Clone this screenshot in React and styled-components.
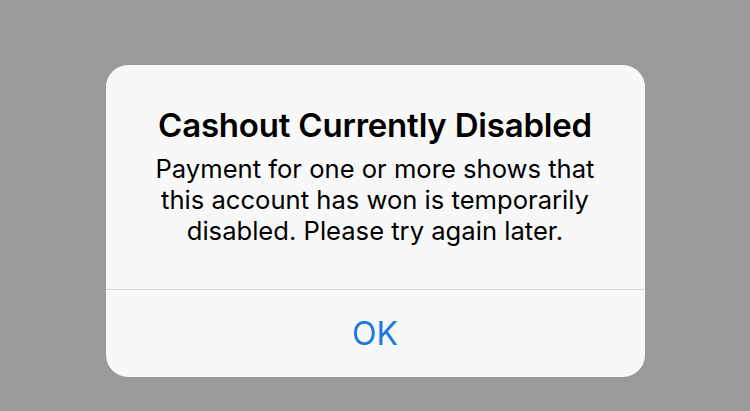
import React from "react";
import styled, { createGlobalStyle } from "styled-components";

const GlobalStyle = createGlobalStyle`
    html, body {
        margin: 0;
        padding: 0;
        background-color: #9a9a9a;
    }
    body {
        font-family: Inter, "Liberation Sans", sans-serif;
    }
`;

const Page = styled.div`
    width: 750px;
    height: 411px;
    display: flex;
    justify-content: center;
    align-items: flex-start;
    padding-top: 65px;
    box-sizing: border-box;
`;

const Dialog = styled.div`
    width: 539px;
    height: 312px;
    background-color: #f8f8f8;
    border-radius: 22px;
    display: flex;
    flex-direction: column;
    overflow: hidden;
`;

const Body = styled.div`
    height: 224px;
    box-sizing: border-box;
    padding: 38px 10px 0;
    text-align: center;
    color: #000;
`;

const Title = styled.h2`
    margin: 0;
    font-size: 33px;
    font-weight: 600;
    line-height: 44px;
    letter-spacing: -0.2px;
`;

const Message = styled.p`
    margin: 6px 0 0;
    font-size: 25.6px;
    font-weight: 400;
    line-height: 31px;
`;

const Actions = styled.div`
    flex: 1;
    display: flex;
    border-top: 1px solid #d9d9dc;
`;

const ActionButton = styled.button`
    flex: 1;
    border: none;
    background: transparent;
    font-family: inherit;
    font-size: 32px;
    font-weight: 400;
    color: #1b7ae0;
    cursor: pointer;
`;

const App = () => {
    return (
        <>
            <GlobalStyle />
            <Page>
                <Dialog>
                    <Body>
                        <Title>Cashout Currently Disabled</Title>
                        <Message>
                            Payment for one or more shows that
                            <br />
                            this account has won is temporarily
                            <br />
                            disabled. Please try again later.
                        </Message>
                    </Body>
                    <Actions>
                        <ActionButton>OK</ActionButton>
                    </Actions>
                </Dialog>
            </Page>
        </>
    );
};

export default App;
